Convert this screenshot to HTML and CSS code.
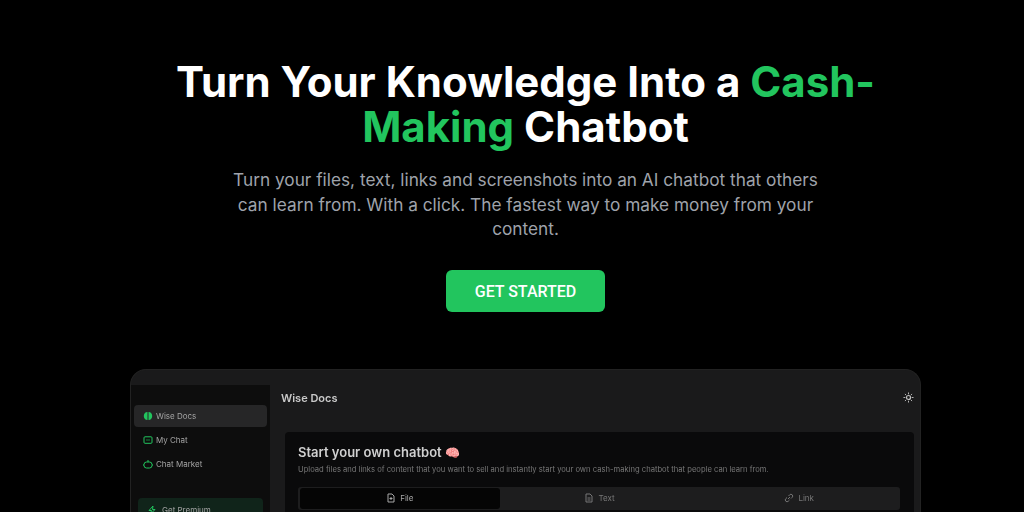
FILE: index.html
```html
<!DOCTYPE html>
<html lang="en">
<head>
<meta charset="utf-8">
<title>Wise Docs</title>
<link rel="stylesheet" href="styles.css">
</head>
<body>
<main class="page">
  <section class="hero">
    <h1 class="title">Turn Your Knowledge Into a <span class="accent">Cash-Making</span> Chatbot</h1>
    <p class="lead">Turn your files, text, links and screenshots into an AI chatbot that others can learn from. With a click. The fastest way to make money from your content.</p>
    <a class="cta" href="#">GET STARTED</a>
  </section>
  <section class="mock">
    <div class="mock-top"></div>
    <div class="mock-body">
      <aside class="side">
        <div class="nav-item active">
          <svg class="nav-icon" viewBox="0 0 10 10"><path d="M4.500 1C2 1 .8 3 .8 5s1.200 4 3.700 4zM5.500 1C8 1 9.200 3 9.200 5s-1.200 4-3.700 4z" fill="#22c55e"/></svg>
          <span>Wise Docs</span>
        </div>
        <div class="nav-item">
          <svg class="nav-icon" viewBox="0 0 10 10"><rect x="1" y="1.800" width="8" height="6.500" rx="1" fill="none" stroke="#22c55e"/><path d="M3 5h4" stroke="#15803d"/></svg>
          <span>My Chat</span>
        </div>
        <div class="nav-item">
          <svg class="nav-icon" viewBox="0 0 10 10"><rect x="1" y="3" width="8" height="6" rx="2.500" fill="none" stroke="#22c55e"/><path d="M5 3V1M0 6h1M9 6h1" stroke="#22c55e"/></svg>
          <span>Chat Market</span>
        </div>
        <div class="premium">
          <svg class="nav-icon" viewBox="0 0 10 10"><path d="M6 1L2 5.500h2.500L3.500 9 8 4.500H5.500z" fill="none" stroke="#22c55e"/></svg>
          <span>Get Premium</span>
        </div>
      </aside>
      <div class="content">
        <header class="content-head">
          <span class="content-title">Wise Docs</span>
          <svg class="sun" viewBox="0 0 12 12"><circle cx="6" cy="6" r="2.200" fill="none" stroke="#c0c0c0" stroke-width="1.300"/><path d="M6 .5v2M6 9.500v2M.5 6h2M9.500 6h2M2.100 2.100l1.400 1.400M8.500 8.500l1.400 1.400M2.100 9.900l1.400-1.400M8.500 3.500l1.400-1.400" stroke="#c0c0c0"/></svg>
        </header>
        <div class="card">
          <h2 class="card-title">Start your own chatbot <span class="brain">🧠</span></h2>
          <p class="card-sub">Upload files and links of content that you want to sell and instantly start your own cash-making chatbot that people can learn from.</p>
          <div class="tabs">
            <div class="tab tab-on">
              <svg class="tab-icon" viewBox="0 0 10 10"><path d="M2 1h4l2 2v6H2zM5 4v3M3.500 5.500h3" fill="none" stroke="#a8a8a8"/></svg>
              <span>File</span>
            </div>
            <div class="tab">
              <svg class="tab-icon" viewBox="0 0 10 10"><path d="M2 1h4l2 2v6H2zM3.500 5h3M3.500 7h3" fill="none" stroke="#777"/></svg>
              <span>Text</span>
            </div>
            <div class="tab">
              <svg class="tab-icon" viewBox="0 0 10 10"><path d="M4 6l2-2M3 4.500L1.800 5.700a1.700 1.700 0 0 0 2.500 2.500L5.500 7M7 5.500l1.200-1.200a1.700 1.700 0 0 0-2.500-2.500L4.500 3" fill="none" stroke="#777"/></svg>
              <span>Link</span>
            </div>
          </div>
        </div>
      </div>
    </div>
  </section>
</main>
</body>
</html>
```

FILE: styles.css
```css
* { box-sizing: border-box; }
html, body { margin: 0; height: 512px; overflow: hidden; background: #000; }
body { font-family: Inter, "Liberation Sans", sans-serif; }
.page { display: flex; flex-direction: column; align-items: center; padding: 59px 0 0 27px; }
.hero { display: flex; flex-direction: column; align-items: center; width: 720px; }
.title { margin: 0; font-size: 42px; line-height: 45px; font-weight: 700; color: #fff; text-align: center; }
.accent { color: #22c55e; }
.lead { margin: 19px 0 0; width: 600px; font-size: 17.250px; line-height: 24.500px; color: #9fa3ab; text-align: center; font-weight: 400; }
.cta { margin-top: 28px; padding-top: 1px; width: 159px; height: 42px; display: flex; align-items: center; justify-content: center; background: #22c55e; color: #fff; border-radius: 6px; font-size: 16px; font-weight: 500; text-decoration: none; font-family: Roboto, sans-serif; }
.mock { margin-top: 57px; width: 791px; height: 143px; flex: none; background: #1a1a1b; border: 1px solid #222; border-bottom: 0; border-radius: 16px 16px 0 0; overflow: hidden; filter: blur(0.6px); }
.mock-top { height: 15px; }
.mock-body { display: flex; height: 128px; }
.side { width: 139px; flex: none; background: #0d0d0d; padding: 20px 3px 0 3px; display: flex; flex-direction: column; gap: 2px; }
.nav-item { height: 22px; flex: none; display: flex; align-items: center; gap: 3px; padding-left: 9px; border-radius: 4px; font-size: 8px; color: #a3a3a3; }
.active { background: #262627; }
.nav-icon { width: 10px; height: 10px; flex: none; }
.premium { margin: 21px 4px 0; height: 24px; flex: none; display: flex; align-items: center; gap: 5px; padding-left: 9px; border-radius: 4px; background: #10241a; font-size: 8px; color: #a3a3a3; }
.content { flex: 1; min-width: 0; padding: 0 6px 0 15px; }
.content-head { height: 47px; display: flex; align-items: center; justify-content: space-between; padding: 0 0 21px 0; margin-left: -4px; }
.content-title { font-size: 11px; font-weight: 600; color: #c9c9c9; }
.sun { width: 11px; height: 11px; }
.card { background: #0a0a0b; border-radius: 4px; padding: 12px 13px 0; height: 100px; }
.card-title { margin: 0; font-size: 13px; line-height: 16px; font-weight: 600; color: #d0d0d0; }
.brain { font-size: 12px; font-family: "Noto Color Emoji", sans-serif; color: #ec4899; }
.card-sub { margin: 3px 0 0; font-size: 7.630px; line-height: 12px; color: #777; white-space: nowrap; }
.tabs { margin-top: 11px; width: 602px; height: 23px; background: #1d1d1e; border-radius: 3px; padding: 1px 1px 1px 2px; display: flex; }
.tab { flex: 1; display: flex; align-items: center; justify-content: center; gap: 4px; font-size: 8px; color: #777; }
.tab-on { background: #050505; color: #a8a8a8; border-radius: 3px; }
.tab-icon { width: 10px; height: 10px; flex: none; }
```
